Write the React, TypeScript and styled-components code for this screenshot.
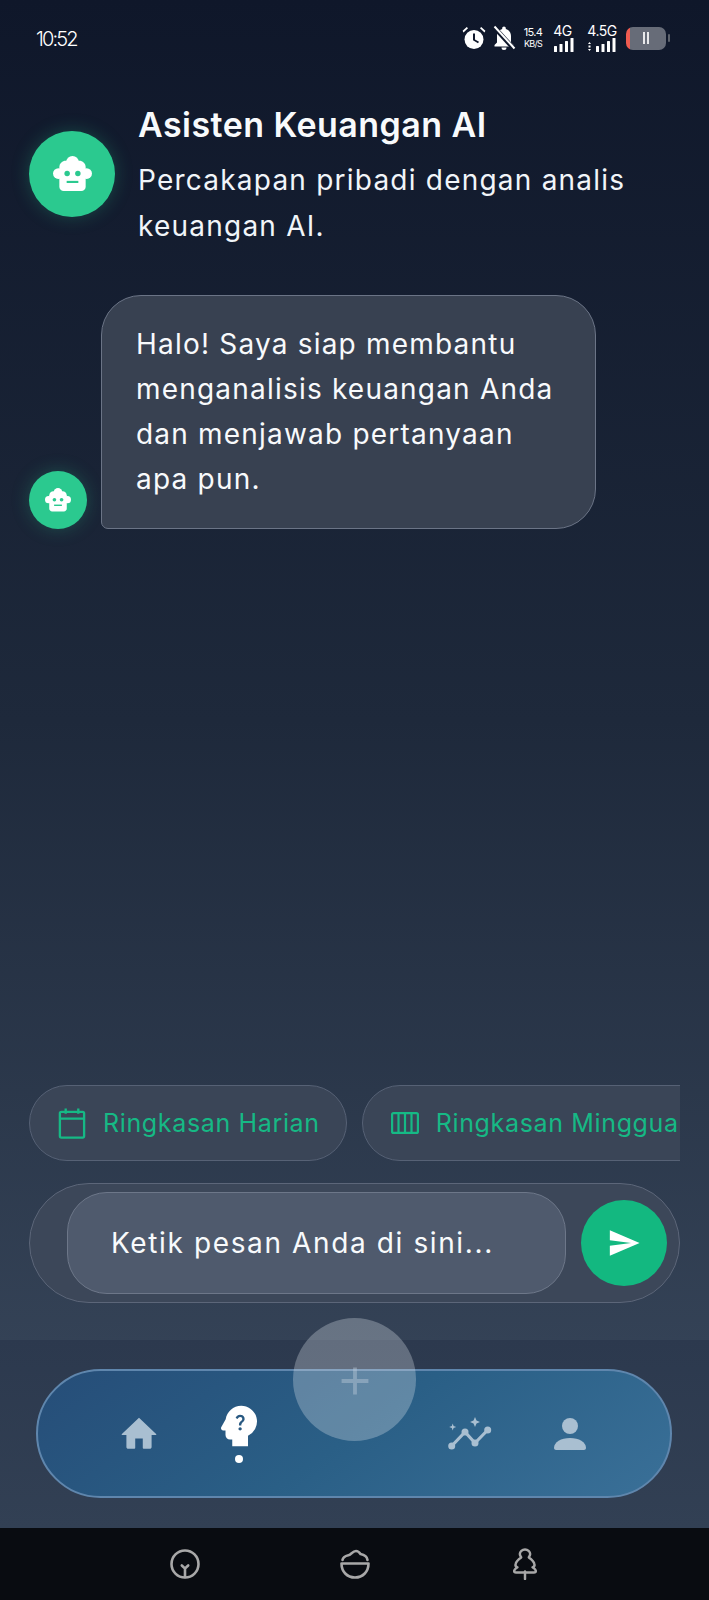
import React from "react";
import styled, { createGlobalStyle } from "styled-components";
import { MdAdd, MdPsychologyAlt, MdSend } from "react-icons/md";

const Global = createGlobalStyle`
  html, body { margin: 0; padding: 0; background: #0f172a; }
  * { box-sizing: border-box; }
`;

const Screen = styled.div`
  width: 709px;
  height: 1600px;
  overflow: hidden;
  display: flex;
  flex-direction: column;
  position: relative;
  font-family: Inter, "Noto Sans", sans-serif;
  color: #fff;
  background: linear-gradient(180deg, #0f172a 0%, #1e293b 45%, #344256 84%);
`;

const StatusBar = styled.div`
  height: 80px;
  padding: 23px 39px 0 36px;
  display: flex;
  justify-content: space-between;
  align-items: flex-start;
`;

const Clock = styled.span`
  font-size: 20px;
  line-height: 32px;
  font-weight: 300;
  letter-spacing: -1.9px;
`;

const StatusIcons = styled.div`
  display: flex;
  align-items: center;
  height: 30px;
`;

const StatusSlot = styled.div<{ $w: number; $mr: number }>`
  width: ${(p) => p.$w}px;
  margin-right: ${(p) => p.$mr}px;
  display: flex;
  flex-direction: column;
  align-items: center;
`;

const Speed = styled.span<{ $size: number }>`
  font-size: ${(p) => p.$size}px;
  line-height: 11px;
  letter-spacing: -0.7px;
  font-weight: 400;
  white-space: nowrap;
`;

const NetLabel = styled.span`
  font-size: 14px;
  line-height: 14px;
  font-weight: 400;
  letter-spacing: -0.5px;
  white-space: nowrap;
`;

const Battery = styled.div`
  width: 40px;
  height: 23px;
  border-radius: 7px;
  background: linear-gradient(90deg, #ef5b50 0 4px, #676c78 4px);
  display: flex;
  align-items: center;
  justify-content: center;
  gap: 2px;
  position: relative;
`;

const BatteryBar = styled.i`
  width: 2px;
  height: 12px;
  background: #e8e8ea;
`;

const BatteryCap = styled.i`
  width: 2px;
  height: 8px;
  border-radius: 1px;
  background: #5d626c;
  margin-left: 2px;
`;

const Header = styled.header`
  display: flex;
  align-items: flex-start;
  gap: 23px;
  padding: 26px 60px 0 29px;
`;

const Avatar = styled.div<{ $size: number }>`
  width: ${(p) => p.$size}px;
  height: ${(p) => p.$size}px;
  flex: none;
  border-radius: 50%;
  background: #2bc98f;
  display: flex;
  align-items: center;
  justify-content: center;
  box-shadow: 0 0 18px rgba(43, 201, 143, 0.26);
`;

const HeaderAvatar = styled(Avatar)`
  margin-top: 25px;
`;

const HeaderText = styled.div`
  display: flex;
  flex-direction: column;
`;

const Title = styled.h1`
  margin: 0;
  font-size: 34px;
  line-height: 38px;
  font-weight: 600;
  letter-spacing: 0.45px;
  color: #f8fafc;
`;

const Subtitle = styled.p`
  margin: 13px 0 0;
  font-size: 28px;
  line-height: 46px;
  letter-spacing: 1.22px;
  font-weight: 400;
  color: #f1f5f9;
`;

const Messages = styled.main`
  flex: 1;
  min-height: 0;
  padding: 46px 0 0 29px;
`;

const MessageRow = styled.div`
  display: flex;
  align-items: flex-end;
  gap: 14px;
`;

const Bubble = styled.div`
  width: 495px;
  height: 234px;
  padding: 26px 30px 0 34px;
  border: 1.5px solid #6b7486;
  border-radius: 40px 40px 40px 7px;
  background: #384151;
  font-size: 28px;
  line-height: 45px;
  letter-spacing: 1.2px;
  color: #f8fafc;
`;

const ChipRow = styled.div`
  margin: 0 29px;
  height: 76px;
  display: flex;
  gap: 15px;
  overflow: hidden;
`;

const Chip = styled.div`
  flex: none;
  height: 76px;
  padding: 0 26px 0 28px;
  display: flex;
  align-items: center;
  gap: 17px;
  border: 1.5px solid #566175;
  border-radius: 38px;
  background: #3a4557;
  color: #16b985;
  font-size: 25px;
  font-weight: 400;
  letter-spacing: 0.65px;
  white-space: nowrap;
`;

const InputBar = styled.div`
  margin: 22px 29px 0;
  height: 120px;
  padding: 0 12px 0 37px;
  display: flex;
  align-items: center;
  gap: 15px;
  border: 1.5px solid #5c6679;
  border-radius: 60px;
  background: #3c4759;
`;

const InputBox = styled.div`
  flex: 1;
  height: 102px;
  padding-left: 43px;
  display: flex;
  align-items: center;
  border: 1.5px solid #6d7789;
  border-radius: 40px;
  background: #4f5a6d;
  font-size: 28px;
  letter-spacing: 1.62px;
  color: #f8fafc;
`;

const SendButton = styled.div`
  width: 86px;
  height: 86px;
  flex: none;
  border-radius: 50%;
  background: #13b880;
  display: flex;
  align-items: center;
  justify-content: center;
`;

const NavArea = styled.div`
  margin-top: 37px;
  height: 188px;
  padding: 29px 37px 0 36px;
  position: relative;
  background: linear-gradient(180deg, #2c394e 0%, #324054 100%);
`;

const NavPill = styled.nav`
  height: 129px;
  padding: 0 0 0 73px;
  display: flex;
  align-items: flex-start;
  gap: 44px;
  border: 2px solid #5f86ad;
  border-radius: 65px;
  background: linear-gradient(145deg, #264d78 0%, #2a5f86 50%, #3a7098 100%);
`;

const NavItem = styled.div<{ $active?: boolean; $mt: number }>`
  width: 56px;
  flex: none;
  margin-top: ${(p) => p.$mt}px;
  display: flex;
  flex-direction: column;
  align-items: center;
  color: ${(p) => (p.$active ? "#fff" : "#a9bfd1")};
`;

const NavGap = styled.div`
  width: 87px;
  flex: none;
`;

const ActiveDot = styled.i`
  width: 8px;
  height: 8px;
  margin-top: 2px;
  border-radius: 50%;
  background: #fff;
`;

const FloatButton = styled.div`
  position: absolute;
  left: 293px;
  top: -22px;
  width: 123px;
  height: 123px;
  border-radius: 50%;
  background: rgba(226, 232, 240, 0.3);
  display: flex;
  align-items: flex-start;
  justify-content: center;
  padding-top: 40px;
  color: rgba(190, 205, 220, 0.42);
`;

const SystemBar = styled.div`
  height: 72px;
  flex: none;
  background: #090c11;
  display: grid;
  grid-template-columns: repeat(3, 32px);
  justify-content: center;
  justify-items: center;
  align-items: center;
  gap: 138px;
  padding-bottom: 1px;
`;

const Robot = ({ width, fill }: { width: number; fill: string }) => (
  <svg width={width} height={(width * 36) / 40} viewBox="0 0 40 36" aria-hidden="true">
    <circle cx="20" cy="6.500" r="6.500" fill="#fff" />
    <circle cx="5.500" cy="18" r="5.500" fill="#fff" />
    <circle cx="34.500" cy="18" r="5.500" fill="#fff" />
    <path fill="#fff" d="M13 5h14c3.500 0 6 2.500 6.500 6v20.500c0 2.500-2 4.500-4.500 4.500H11c-2.500 0-4.500-2-4.500-4.500V11C7 7.500 9.500 5 13 5Z" />
    <circle cx="14.500" cy="18" r="2.800" fill={fill} />
    <circle cx="25.500" cy="18" r="2.800" fill={fill} />
    <rect x="14" y="25.500" width="12" height="2.200" fill={fill} />
  </svg>
);

const AlarmIcon = () => (
  <svg width="24" height="24" viewBox="0 0 24 24" aria-hidden="true" fill="#fff">
    <circle cx="12" cy="13.500" r="9.500" />
    <path d="M1.500 6.500 6 2.200 4.800 1 .6 4.800ZM22.500 6.500 18 2.200 19.200 1l4.200 3.800Z" />
    <path d="M11 7.500h2v6l4 2.300-1 1.500-5-3Z" fill="#0f172a" />
  </svg>
);

const BellOffIcon = () => (
  <svg width="24" height="26" viewBox="0 0 24 26" aria-hidden="true" fill="#fff">
    <path d="M12 1.500c-1 0-1.800.8-1.800 1.800v.6C7 4.700 5 7.500 5 11v6.500L2.500 20v1.500h19V20L19 17.500V11c0-3.500-2-6.300-5.200-7.100v-.6c0-1-.8-1.800-1.800-1.800Z" />
    <path d="M9.500 22.500a2.500 2.500 0 0 0 5 0Z" />
    <path d="M2 2 22 24" stroke="#0f172a" strokeWidth="4.500" />
    <path d="M2.500 1.500 22.500 23.500" stroke="#fff" strokeWidth="2" />
  </svg>
);

const Signal = ({ width, dots }: { width: number; dots?: boolean }) => (
  <svg width={width} height="14" viewBox={`0 0 ${width} 14`} aria-hidden="true" fill="#fff">
    {dots && <path d="M1.500 4 3 6H0ZM1.500 13 0 11h3ZM.5 7.500h2v2h-2Z" />}
    {[8, 6, 3, 0].map((t, i) => {
      const x = width - 20 + i * 5.500;
      return <rect key={i} x={x} y={t} width="3" height={14 - t} rx="0.5" />;
    })}
  </svg>
);

const HomeIcon = () => (
  <svg width="36" height="33" viewBox="0 0 40 36" aria-hidden="true" fill="currentColor">
    <path d="M20 0.500 39 18.500c.5.5.2 1.200-.5 1.200H34V33c0 1-.9 2-2 2h-6.500c-.8 0-1.300-.6-1.300-1.300V23.500h-8.400v10.200c0 .7-.5 1.300-1.300 1.300H8c-1.100 0-2-1-2-2V19.700H1.500c-.7 0-1-.7-.5-1.200Z" />
  </svg>
);

const UserIcon = () => (
  <svg width="32" height="32" viewBox="0 0 32 32" aria-hidden="true" fill="currentColor">
    <circle cx="16" cy="8" r="8" />
    <path d="M2 32c-1 0-2-.8-2-2 0-6 7-10 16-10s16 4 16 10c0 1.200-1 2-2 2Z" />
  </svg>
);

const GraphIcon = () => (
  <svg width="44" height="34" viewBox="0 0 44 34" aria-hidden="true" fill="currentColor">
    <path d="M3.700 29 17 15l10 11 12.700-13" fill="none" stroke="currentColor" strokeWidth="3.200" strokeLinejoin="round" />
    <circle cx="3.700" cy="29" r="3.500" />
    <circle cx="17" cy="15" r="3.500" />
    <circle cx="27" cy="26" r="3.500" />
    <circle cx="39.700" cy="13" r="3.500" />
    <path d="M27 0l1.500 3.500L32 5l-3.500 1.500L27 10l-1.500-3.500L22 5l3.500-1.500Z" />
    <path d="M4.700 6.500l.9 2.600 2.600.9-2.600.9-.9 2.600-.9-2.600L1.200 10l2.600-.9Z" />
  </svg>
);

const TreeRound = () => (
  <svg width="32" height="32" viewBox="0 0 32 32" aria-hidden="true" fill="none" stroke="#a8a8a8" strokeWidth="2.600" strokeLinecap="round">
    <circle cx="16" cy="16" r="13.500" />
    <path d="M16 29V20M12.800 17.500 16 20.500l3.200-3" />
  </svg>
);

const BowlIcon = () => (
  <svg width="32" height="32" viewBox="0 0 32 32" aria-hidden="true" fill="none" stroke="#a8a8a8" strokeWidth="2.600" strokeLinecap="round" strokeLinejoin="round">
    <path d="M3.500 12C4 8 8 7.500 10 7c2-.8 4-4 7-4 2 0 3.500 1.500 4.500 3 3 .5 6.500 2 7 6" />
    <path d="M2.500 15.500h27C29.500 23.500 24 29.500 16 29.500S2.500 23.500 2.500 15.500Z" />
  </svg>
);

const PineIcon = () => (
  <svg width="26" height="32" viewBox="0 0 26 34" aria-hidden="true" fill="none" stroke="#a8a8a8" strokeWidth="2.600" strokeLinecap="round" strokeLinejoin="round">
    <path d="M13 1.500c-3 0-5.500 2.500-5.500 5 0 1.500 1 2.500 1.500 3.500-3 2-5.500 4.500-6 7-.5 2 .5 3 2 3.500-1.500 1-3.500 2.500-3.500 4 0 1 1 1.500 2 1.500h19c1 0 2-.5 2-1.500 0-1.500-2-3-3.500-4 1.500-.5 2.500-1.500 2-3.500-.5-2.500-3-5-6-7 .5-1 1.500-2 1.500-3.500 0-2.500-2.500-5-5.500-5Z" />
    <path d="M13 25v8" />
  </svg>
);

const CalendarIcon = () => (
  <svg width="28" height="31" viewBox="0 0 28 32" aria-hidden="true" fill="none" stroke="currentColor" strokeWidth="2.400">
    <rect x="1.500" y="4" width="25" height="26.500" rx="1.500" />
    <path d="M1.500 11h25M7.500 0.500V6M20.500 0.500V6" />
  </svg>
);

const WeekIcon = () => (
  <svg width="28" height="22" viewBox="0 0 28 22" aria-hidden="true" fill="none" stroke="currentColor" strokeWidth="2.200">
    <rect x="1.100" y="1.100" width="25.800" height="19.800" rx="1.500" />
    <path d="M7.500 1v20M14 1v20M20.500 1v20" />
  </svg>
);

export default function App() {
  return (
    <Screen>
      <Global />
      <StatusBar>
        <Clock>10:52</Clock>
        <StatusIcons>
          <StatusSlot $w={24} $mr={6}><AlarmIcon /></StatusSlot>
          <StatusSlot $w={24} $mr={6}><BellOffIcon /></StatusSlot>
          <StatusSlot $w={22} $mr={7}>
            <Speed $size={11}>15.4</Speed>
            <Speed $size={9}>KB/S</Speed>
          </StatusSlot>
          <StatusSlot $w={23} $mr={13}>
            <NetLabel>4G</NetLabel>
            <Signal width={22} />
          </StatusSlot>
          <StatusSlot $w={30} $mr={9}>
            <NetLabel>4.5G</NetLabel>
            <Signal width={28} dots />
          </StatusSlot>
          <Battery>
            <BatteryBar />
            <BatteryBar />
          </Battery>
          <BatteryCap />
        </StatusIcons>
      </StatusBar>

      <Header>
        <HeaderAvatar $size={86}><Robot width={39} fill="#2bc98f" /></HeaderAvatar>
        <HeaderText>
          <Title>Asisten Keuangan AI</Title>
          <Subtitle>Percakapan pribadi dengan analis keuangan AI.</Subtitle>
        </HeaderText>
      </Header>

      <Messages>
        <MessageRow>
          <Avatar $size={58}><Robot width={26} fill="#2bc98f" /></Avatar>
          <Bubble>Halo! Saya siap membantu menganalisis keuangan Anda dan menjawab pertanyaan apa pun.</Bubble>
        </MessageRow>
      </Messages>

      <ChipRow>
        <Chip><CalendarIcon />Ringkasan Harian</Chip>
        <Chip><WeekIcon />Ringkasan Mingguan</Chip>
      </ChipRow>

      <InputBar>
        <InputBox>Ketik pesan Anda di sini...</InputBox>
        <SendButton><MdSend size={34} color="#fff" /></SendButton>
      </InputBar>

      <NavArea>
        <NavPill>
          <NavItem $mt={46}><HomeIcon /></NavItem>
          <NavItem $mt={28} $active><MdPsychologyAlt size={54} /><ActiveDot /></NavItem>
          <NavGap />
          <NavItem $mt={46}><GraphIcon /></NavItem>
          <NavItem $mt={47}><UserIcon /></NavItem>
        </NavPill>
        <FloatButton><MdAdd size={46} /></FloatButton>
      </NavArea>

      <SystemBar>
        <TreeRound />
        <BowlIcon />
        <PineIcon />
      </SystemBar>
    </Screen>
  );
}
